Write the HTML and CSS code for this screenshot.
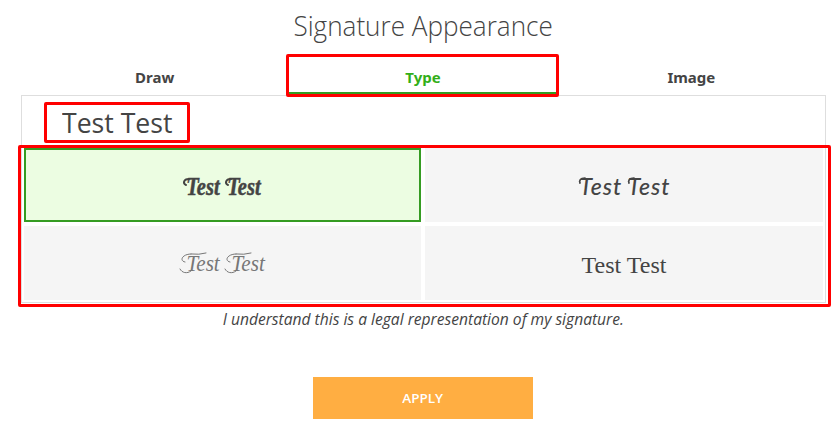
FILE: index.html
```html
<!DOCTYPE html>
<html lang="en">
<head>
<meta charset="utf-8">
<title>Signature Appearance</title>
<link rel="stylesheet" href="styles.css">
</head>
<body>
<main class="dialog">
  <h1 class="title"><span>Signature Appearance</span></h1>
  <nav class="tabs">
    <a class="tab"><span>Draw</span></a>
    <a class="tab active"><span>Type</span></a>
    <a class="tab"><span>Image</span></a>
  </nav>
  <section class="panel">
    <div class="typed"><span>Test Test</span></div>
    <div class="options">
      <div class="option selected"><span class="lobster">Test Test</span>
        <svg class="swash bold" width="80" height="24"><path d="M6 3C0 3 0 8 3 9M48 3C42 3 42 8 45 9"/></svg></div>
      <div class="option"><span class="brush">Test Test</span>
        <svg class="swash medium" width="92" height="24"><path d="M7 3C2 3 1 6 2 8M56 3C51 3 50 6 51 8"/></svg></div>
      <div class="option"><span class="script">Test Test</span>
        <svg class="swash thin" width="86" height="24"><path d="M12 3C3 3 0 10 6 11M12 20C8 23 3 22 1 18M57 3C48 3 45 10 51 11M57 20C53 23 48 22 46 18M12 3Q20 4 27 2M57 3Q65 4 72 2"/></svg></div>
      <div class="option"><span class="serif">Test Test</span></div>
    </div>
  </section>
  <p class="legal"><span>I understand this is a legal representation of my signature.</span></p>
  <button class="apply"><span>APPLY</span></button>
</main>
<div class="mark mark-tab"></div>
<div class="mark mark-name"></div>
<div class="mark mark-options"></div>
</body>
</html>
```
FILE: styles.css
```css
* { box-sizing: border-box; }
body { margin: 0; width: 834px; height: 427px; overflow: hidden; position: relative; background: #fff; color: #444; font-family: "Noto Sans", "Open Sans", sans-serif; }
.dialog { display: flex; flex-direction: column; width: 805px; margin-left: 21px; }
.dialog span { display: inline-block; white-space: nowrap; }
.title { margin: 0; height: 57px; line-height: 50px; font-family: "Open Sans", sans-serif; font-size: 28px; font-weight: 300; text-align: center; }
.title span { transform: scaleX(.932); }
.tabs { display: flex; height: 38px; }
.tab { flex: 1; height: 38px; line-height: 41px; text-align: center; font-size: 15px; font-weight: 700; }
.tab span { transform: translateX(-.5px); }
.tab.active { color: #33af18; border-bottom: 3px solid #359c22; }
.panel { height: 208px; border: 1px solid #dedede; padding: 0 2px 2px; }
.typed { height: 52px; padding-left: 38px; font-family: "Open Sans", sans-serif; font-size: 28px; line-height: 53px; }
.typed span { transform: scaleX(.95); transform-origin: left; }
.options { display: grid; grid-template-columns: 397px 398px; grid-template-rows: 74px 74px; gap: 4px; }
.option { position: relative; background: #f5f5f5; display: flex; align-items: center; justify-content: center; }
.option.selected { background: #ecfde2; border: 2px solid #359c22; }
.lobster { font: italic 700 25px "Liberation Serif", serif; word-spacing: 3px; transform: translate(1px, 2px) scaleX(.82); -webkit-text-stroke: .5px #444; }
.brush { font: italic 500 23px Lato, sans-serif; letter-spacing: 1px; transform: translate(1px, 1px); }
.script { font: italic 400 23px "Liberation Serif", serif; color: #777; word-spacing: 7px; transform: translate(3px, 1px) scaleX(.92); }
.serif { font: 24px "Liberation Serif", serif; transform: translateY(2px); }
.swash { position: absolute; fill: none; stroke: #444; stroke-linecap: round; overflow: visible; }
.swash.bold { left: 157px; top: 26px; stroke-width: 2; }
.swash.medium { left: 153px; top: 27px; stroke-width: 1.7; }
.swash.thin { left: 155px; top: 25px; stroke: #777; stroke-width: 1; }
.legal { margin: 0; height: 74px; line-height: 32px; font-family: "Open Sans", sans-serif; font-size: 16px; font-style: italic; text-align: center; }
.legal span { transform: translateX(-.5px) scaleX(.975); }
.apply { align-self: center; margin-right: 1px; width: 220px; height: 42px; border: 0; padding: 0; background: #ffae42; color: #fff; font: 600 13px "Open Sans", sans-serif; }
.apply span { transform: scaleX(1.04); }
.mark { position: absolute; border: 3px solid #f00; border-radius: 2px; }
.mark-tab { left: 286px; top: 54px; width: 273px; height: 43px; }
.mark-name { left: 44px; top: 102px; width: 146px; height: 41px; }
.mark-options { left: 18px; top: 145px; width: 813px; height: 162px; }
```
